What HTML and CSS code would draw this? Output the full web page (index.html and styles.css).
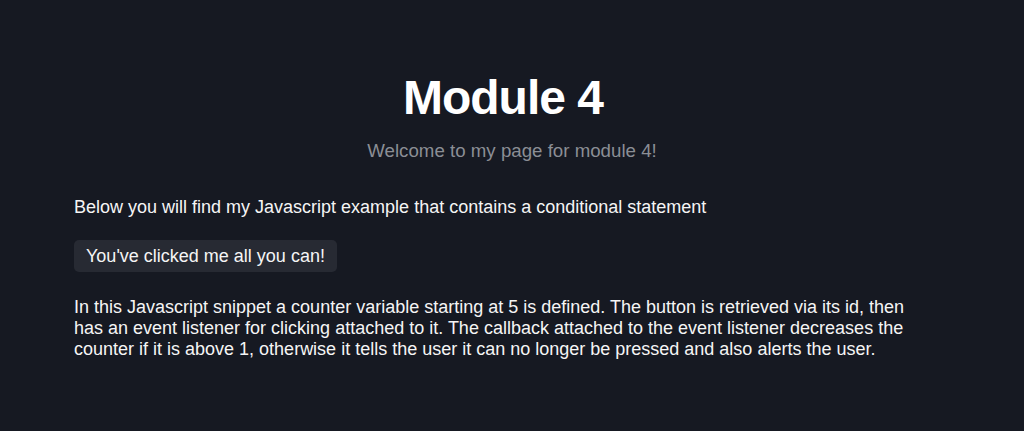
FILE: index.html
```html
<!DOCTYPE html>
<html lang="en">
<head>
<meta charset="utf-8">
<title>Module 4</title>
<link rel="stylesheet" href="styles.css">
</head>
<body>
  <header class="hero">
    <h1 class="hero-title">Module 4</h1>
    <p class="hero-subtitle">Welcome to my page for module 4!</p>
  </header>
  <main class="content">
    <p class="intro">Below you will find my Javascript example that contains a conditional statement</p>
    <button class="counter-btn" type="button">You've clicked me all you can!</button>
    <p class="explain">In this Javascript snippet a counter variable starting at 5 is defined. The button is retrieved via its id, then has an event listener for clicking attached to it. The callback attached to the event listener decreases the counter if it is above 1, otherwise it tells the user it can no longer be pressed and also alerts the user.</p>
  </main>
</body>
</html>
```

FILE: styles.css
```css
html, body {
  margin: 0;
  padding: 0;
}

body {
  background: #161922;
  color: #f5f5f5;
  font-family: "Liberation Sans", Arial, sans-serif;
  font-size: 18px;
  line-height: 1.15;
  min-height: 431px;
}

.hero {
  display: flex;
  flex-direction: column;
  align-items: center;
  padding-top: 70px;
}

.hero-title {
  margin: 0;
  font-size: 48px;
  font-weight: 700;
  line-height: 55px;
  letter-spacing: -1px;
  color: #ffffff;
  padding-right: 18px;
}

.hero-subtitle {
  margin: 15px 0 0;
  font-size: 18.7px;
  color: #8b8e95;
}

.content {
  padding: 35px 74px 0;
  display: flex;
  flex-direction: column;
  align-items: flex-start;
}

.intro {
  margin: 0;
}

.counter-btn {
  margin-top: 23px;
  font-family: inherit;
  font-size: 18px;
  line-height: 24px;
  color: #f5f5f5;
  background: #272a33;
  border: none;
  border-radius: 5px;
  padding: 4px 12px;
}

.explain {
  margin: 25px 0 0;
  max-width: 845px;
}
```
